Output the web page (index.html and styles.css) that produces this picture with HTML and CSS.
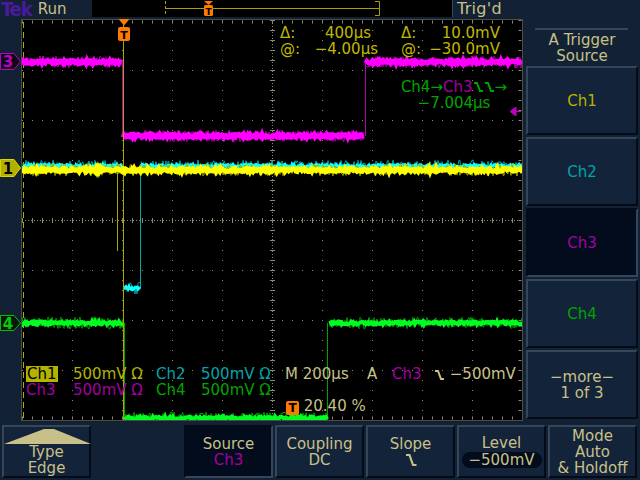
FILE: index.html
```html
<!DOCTYPE html>
<html lang="en">
  <head>
    <meta charset="UTF-8" />
    <meta name="viewport" content="width=device-width, initial-scale=1.0" />
    <title>Scope - A Trigger Source</title>
    <link rel="stylesheet" href="styles.css">
  </head>
  <body>
    <!-- Status bar -->
    <div class="topbar">
      <div class="brand"><span class="tek">Tek</span><span class="state">Run</span></div>
      <div class="record">
        <svg width="360" height="17" viewBox="92 0 360 17">
          <path d="M166 8.5H379" stroke="#a8a000" />
          <path d="M165.5 1V16" stroke="#a8a000" stroke-dasharray="3 2" />
          <path d="M375 1.5H379.5V15.5H375" stroke="#a8a000" fill="none" />
          <path d="M204 1H213L208.5 5Z" fill="#ff7a00" />
          <rect x="204" y="5" width="9" height="11" rx="1.5" fill="#ff7a00" />
          <text x="208.5" y="14.5" class="tmark small">T</text>
        </svg>
      </div>
      <div class="trig">Trig'd</div>
    </div>

    <div class="middle">
      <!-- Channel ground markers -->
      <div class="gutter">
        <svg width="21" height="402" viewBox="0 19 21 402">
          <polygon points="0.5,53.5 14,53.5 20.5,61.5 14,69.5 0.5,69.5" fill="#0c0a18" stroke="#c000c0" />
          <text x="8" y="67" class="mk" fill="#c000c0">3</text>
          <polygon points="0.5,159.5 14,159.5 20.5,168 14,176.5 0.5,176.5" fill="#b4b000" stroke="#d8d800" />
          <text x="8" y="174" class="mk" fill="#000">1</text>
          <polygon points="0.5,315.5 14,315.5 20.5,323 14,330.5 0.5,330.5" fill="#0a180a" stroke="#00c000" />
          <text x="8" y="329" class="mk" fill="#00d000">4</text>
        </svg>
      </div>

      <!-- Graticule and waveforms -->
      <div class="graticule">
        <svg class="screen" width="502" height="402" viewBox="21 19 502 402">
          <defs>
            <clipPath id="area"><rect x="22" y="20" width="500" height="400" /></clipPath>
          </defs>
          <g stroke="#8a8a74" fill="none">
            <path d="M72.5 20V420M122.5 20V420M172.5 20V420M222.5 20V420M322.5 20V420M372.5 20V420M422.5 20V420M472.5 20V420" stroke-dasharray="1 9" />
            <path d="M22 70.5H522M22 120.5H522M22 170.5H522M22 270.5H522M22 320.5H522M22 370.5H522" stroke-dasharray="1 9" />
            <path d="M272.5 20V420M22 220.5H522" stroke-dasharray="1 2" />
            <path d="M272.5 20V420M22 220.5H522" stroke-width="5" stroke-dasharray="1 9" />
            <rect x="21.5" y="19.5" width="501" height="401" stroke="#9a9a86" stroke-dasharray="1 1" />
            <path d="M22 22H522M22 418H522M520 20V420" stroke-width="3" stroke-dasharray="1 9" />
          </g>
          <path d="M23.5 22V420" stroke="#b4ac00" stroke-dasharray="6 4" />
          <g id="traces" clip-path="url(#area)"></g>
          <path d="M118.5 19H129.5L124 25.5Z" fill="#ff7a00" />
          <rect x="118" y="27" width="12" height="14" rx="2" fill="#ff7a00" />
          <text x="124" y="38.5" class="tmark">T</text>
          <path d="M510 111.5L516 107V116Z M516 111.5H521" fill="#c000c0" stroke="#c000c0" />
        </svg>

        <div class="cursors">
          <div class="cur-col left">
            <div class="cur-row"><span>&Delta;:</span><span class="shift">400µs</span></div>
            <div class="cur-row"><span>@:</span><span>&minus;4.00µs</span></div>
          </div>
          <div class="cur-col right">
            <div class="cur-row"><span>&Delta;:</span><span>10.0mV</span></div>
            <div class="cur-row"><span>@:</span><span>&minus;30.0mV</span></div>
          </div>
        </div>

        <div class="delay">
          <div>Ch4&rarr;<span class="c3">Ch3</span><svg class="edge" width="11" height="12"><path d="M1 2H4L7 10H10" /></svg><svg class="edge" width="11" height="12"><path d="M1 2H4L7 10H10" /></svg>&rarr;</div>
          <div>&minus;7.004µs</div>
        </div>

        <div class="readout">
          <span class="c1"><span class="badge">Ch1</span></span>
          <span class="c1">500mV &Omega;</span>
          <span class="c2">Ch2</span>
          <span class="c2">500mV &Omega;</span>
          <span>M 200µs</span>
          <span>A</span>
          <span class="c3">Ch3</span>
          <span><svg class="edge tan" width="11" height="12"><path d="M1 2H4L7 10H10" /></svg> &minus;500mV</span>

          <span class="c3">Ch3</span>
          <span class="c3">500mV &Omega;</span>
          <span class="c4">Ch4</span>
          <span class="c4">500mV &Omega;</span>
          <span class="span4"></span>

          <span class="span4"></span>
          <span class="span4"><span class="tbadge">T</span> 20.40 %</span>
        </div>
      </div>

      <!-- Side menu -->
      <div class="menu">
        <div class="menu-title">A Trigger<br />Source</div>
        <div class="menu-btn c1">Ch1</div>
        <div class="menu-btn c2">Ch2</div>
        <div class="menu-btn sel c3">Ch3</div>
        <div class="menu-btn c4">Ch4</div>
        <div class="menu-btn">&minus;more&minus;<br />1 of 3</div>
      </div>
    </div>

    <!-- Bottom soft keys -->
    <div class="softkeys">
      <div class="key type">
        <svg class="pop" width="89" height="16" viewBox="0 0 89 16"><polygon points="1,15 41,0 51,0 88,15" /></svg>
        <div>Type</div>
        <div>Edge</div>
      </div>
      <div class="spacer"></div>
      <div class="key sel">
        <div>Source</div>
        <div class="c3">Ch3</div>
      </div>
      <div class="key">
        <div>Coupling</div>
        <div>DC</div>
      </div>
      <div class="key">
        <div>Slope</div>
        <div><svg class="edge tan big" width="14" height="14"><path d="M2 2H5.5L9 12H12.5" /></svg></div>
      </div>
      <div class="key">
        <div>Level</div>
        <div class="pill">&minus;500mV</div>
      </div>
      <div class="key">
        <div>Mode</div>
        <div>Auto</div>
        <div>&amp; Holdoff</div>
      </div>
    </div>

    <script>
      // Simple seeded random so the noise is the same every time
      let seed = 11;
      const rnd = () => {
        seed = (seed * 16807) % 2147483647;
        return seed / 2147483647;
      };

      const traces = document.getElementById("traces");

      // Noisy horizontal level
      function level(x1, x2, y, amp) {
        let d = "";
        for (let x = x1; x <= x2; x++) {
          d += (x === x1 ? "M" : "L") + x + " " + (y + (rnd() - 0.5) * amp).toFixed(1) + " ";
        }
        return d;
      }

      function addPath(d, color, width) {
        const p = document.createElementNS("http://www.w3.org/2000/svg", "path");
        p.setAttribute("d", d);
        p.setAttribute("stroke", color);
        p.setAttribute("stroke-width", width);
        p.setAttribute("fill", "none");
        traces.appendChild(p);
      }

      const channels = [
        {
          bright: "#00ff20", dim: "#00a000", width: 4,
          levels: [[22, 123, 323], [125, 327, 418], [329, 522, 323]],
          edges: [[124.5, 323, 420], [327.5, 323, 420]]
        },
        {
          bright: "#ff00ff", dim: "#b000b0", width: 5,
          levels: [[22, 122, 62], [123, 364, 136], [366, 522, 62]],
          edges: [[122.5, 62, 136], [365.5, 62, 136]]
        },
        {
          bright: "#10ffff", dim: "#00a8a8", width: 3,
          levels: [[22, 122, 166], [124, 140, 288], [141, 522, 166]],
          edges: [[123.5, 166, 288], [140.5, 166, 288]]
        },
        {
          bright: "#ffff00", dim: "#a8a800", width: 5,
          levels: [[22, 522, 170]],
          edges: [[123.5, 24, 420], [117.5, 170, 251]]
        }
      ];

      channels.forEach((ch) => {
        ch.edges.forEach(([x, y1, y2]) => addPath(`M${x} ${y1}V${y2}`, ch.dim, 1));
        ch.levels.forEach(([x1, x2, y]) => {
          addPath(level(x1, x2, y, 12), ch.dim, 1);
          addPath(level(x1, x2, y, 3), ch.bright, ch.width);
        });
      });
    </script>
  </body>
</html>
```

FILE: styles.css
```css
* {
  margin: 0;
  padding: 0;
  box-sizing: border-box;
}

body {
  width: 640px;
  height: 480px;
  overflow: hidden;
  background-color: #122234;
  color: #c8c088;
  font-family: "DejaVu Sans", "Liberation Sans", sans-serif;
  font-size: 15px;
  line-height: 16px;
}

svg {
  display: block;
}

.c1 {
  color: #b4b400;
}

.c2 {
  color: #00a4a8;
}

.c3 {
  color: #a400a4;
}

.c4 {
  color: #00a400;
}

/* Status bar */
.topbar {
  display: flex;
  height: 19px;
}

.brand {
  width: 92px;
  display: flex;
  align-items: center;
}

.tek {
  font-family: "DejaVu Sans Condensed", "DejaVu Sans", sans-serif;
  font-weight: bold;
  font-size: 20px;
  line-height: 19px;
  letter-spacing: -1px;
  color: #4a1a9c;
  margin-left: 1px;
}

.state {
  margin-left: 6px;
  margin-top: -2px;
  font-size: 15px;
}

.record {
  width: 361px;
  height: 17px;
  background-color: #000;
  border-right: 1px solid #34465a;
}

.trig {
  margin-left: 4px;
  font-size: 16px;
  line-height: 17px;
  letter-spacing: 0.3px;
}

.tmark {
  font: bold 11px "DejaVu Sans", sans-serif;
  fill: #000;
  text-anchor: middle;
}

.tmark.small {
  font-size: 9px;
}

/* Middle area */
.middle {
  display: flex;
  height: 402px;
}

.gutter {
  width: 21px;
}

.mk {
  font: bold 15px "DejaVu Sans", sans-serif;
  text-anchor: middle;
}

.graticule {
  position: relative;
  width: 502px;
  height: 402px;
  background-color: #000;
}

.screen {
  position: absolute;
  top: 0;
  left: 0;
}

.cursors {
  position: absolute;
  top: 6px;
  left: 259px;
  display: flex;
  gap: 23px;
  color: #c0b800;
}

.cur-col.left {
  width: 98px;
}

.cur-col.right {
  width: 99px;
}

.cur-row {
  display: flex;
  justify-content: space-between;
}

.shift {
  margin-right: 7px;
}

.delay {
  position: absolute;
  top: 60px;
  left: 378px;
  width: 110px;
  text-align: center;
  color: #00a400;
}

.delay div {
  display: flex;
  justify-content: center;
  align-items: center;
}

.edge {
  display: inline-block;
  vertical-align: middle;
}

.edge path {
  fill: none;
  stroke: #00a400;
  stroke-width: 2;
}

.edge.tan path {
  stroke: #c8c088;
}

.readout {
  position: absolute;
  top: 347px;
  left: 5px;
  display: grid;
  grid-template-columns: 47px 83px 45px 84px 82px 25px 42px auto;
  white-space: nowrap;
}

.span4 {
  grid-column: span 4;
}

.badge {
  display: inline-block;
  background-color: #b4b400;
  color: #000;
  padding: 0 1px;
}

.tbadge {
  display: inline-block;
  width: 13px;
  height: 14px;
  margin-left: 1px;
  border-radius: 2px;
  background-color: #ff7a00;
  color: #000;
  font-weight: bold;
  font-size: 12px;
  line-height: 14px;
  text-align: center;
  vertical-align: -1px;
}

/* Side menu */
.menu {
  width: 112px;
  margin-left: 3px;
  display: flex;
  flex-direction: column;
  gap: 2px;
}

.menu-title {
  height: 45px;
  padding-top: 13px;
  text-align: center;
  position: relative;
}

.menu-title::before {
  content: "";
  position: absolute;
  top: 9px;
  left: 9px;
  right: 10px;
  height: 2px;
  background-color: #34465a;
}

.menu-btn,
.key {
  background-color: #13233a;
  border: 2px solid;
  border-color: #34465a #040a16 #040a16 #34465a;
  display: flex;
  flex-direction: column;
  align-items: center;
  justify-content: center;
  text-align: center;
}

.menu-btn {
  height: 69px;
}

.menu-btn.sel,
.key.sel {
  background-color: #020c1c;
  border-color: #040a16 #34465a #34465a #040a16;
}

/* Bottom soft keys */
.softkeys {
  display: flex;
  gap: 2px;
  padding: 4px 0 0 2px;
}

.key {
  width: 89px;
  height: 53px;
  position: relative;
}

.key.type {
  justify-content: flex-end;
  padding-top: 18px;
  padding-bottom: 0;
}

.pop {
  position: absolute;
  top: 2px;
  left: -1px;
}

.pop polygon {
  fill: #c8c088;
}

.spacer {
  width: 89px;
}

.edge.big path {
  stroke-width: 2.2;
}

.pill {
  margin-top: 1px;
  padding: 0 6px;
  border-radius: 8px;
  background-color: #020c1c;
  width: 80px;
}
```
